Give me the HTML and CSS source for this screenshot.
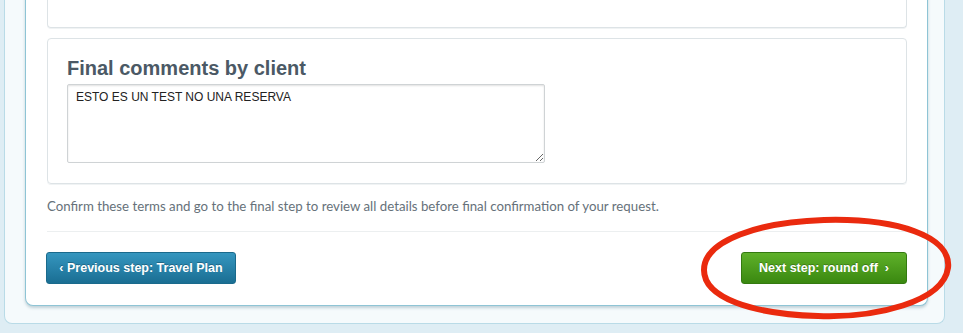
FILE: index.html
```html
<!DOCTYPE html>
<html>
<head>
    <title>Booking - Terms</title>
    <meta charset="UTF-8">
    <link rel="stylesheet" href="styles.css">
</head>
<body>
    <div class="outer">
        <div class="panel">
            <div class="box box_top"></div>
            <div class="box box_comments">
                <h2>Final comments by client</h2>
                <textarea>ESTO ES UN TEST NO UNA RESERVA</textarea>
            </div>
            <p class="note">Confirm these terms and go to the final step to review all details before final confirmation of your request.</p>
            <div class="actions">
                <a class="btn btn_prev" href="#">&lsaquo; Previous step: Travel Plan</a>
                <a class="btn btn_next" href="#">Next step: round off &nbsp;&rsaquo;</a>
            </div>
        </div>
    </div>
    <svg class="mark" width="260" height="110" viewBox="0 0 260 110">
        <path d="M124 4 C196 2 252 20 248 52 C243 86 176 102 118 100 C52 98 4 82 4 54 C4 24 60 6 124 4 Z" fill="none" stroke="#ea2a0e" stroke-width="6"/>
    </svg>
</body>
</html>
```

FILE: styles.css
```css
body{
    margin: 0;
    background: #deedf4;
    font-family: "Liberation Sans", Arial, sans-serif;
}
.outer{
    width: 903px;
    margin: -30px 0 0 4px;
    padding: 0 16px 17px 20px;
    background: #f5fafc;
    border: 1px solid #b9dbe7;
    border-top: none;
    border-radius: 0 0 8px 8px;
}
.panel{
    background: #fff;
    border: 1px solid #8ec4d5;
    border-top: none;
    border-radius: 0 0 8px 8px;
    box-shadow: 0 2px 3px rgba(40,90,110,.25);
    padding: 0 20px 21px 21px;
}
.box{
    border: 1px solid #dde3e6;
    border-radius: 4px;
    box-shadow: 0 1px 0 #f0f3f4;
}
.box_top{
    height: 57px;
    border-top: none;
    border-radius: 0 0 4px 4px;
}
.box_comments{
    margin-top: 10px;
    padding: 17px 19px 20px;
}
.box_comments h2{
    margin: 0 0 4px;
    font-size: 20px;
    line-height: 24px;
    color: #4b5965;
}
.box_comments textarea{
    display: block;
    box-sizing: border-box;
    width: 478px;
    height: 79px;
    margin: 0;
    padding: 5px 8px;
    border: 1px solid #cfd3d5;
    border-radius: 2px;
    box-shadow: inset 0 1px 2px rgba(0,0,0,.12);
    font-family: "Liberation Sans", Arial, sans-serif;
    font-size: 12px;
    color: #222;
    resize: vertical;
}
.note{
    margin: 0;
    padding: 14px 0 17px;
    border-bottom: 1px solid #eceff0;
    font-family: Lato, "Noto Sans", sans-serif;
    font-size: 13.25px;
    color: #66717a;
}
.actions{
    display: flex;
    justify-content: space-between;
    padding-top: 20px;
}
.btn{
    display: block;
    height: 32px;
    box-sizing: border-box;
    line-height: 30px;
    border-radius: 3px;
    font-size: 12.5px;
    font-weight: bold;
    color: #fff;
    text-decoration: none;
    text-shadow: 0 -1px 0 rgba(0,0,0,.25);
    text-align: center;
}
.btn_prev{
    width: 190px;
    margin-left: -1px;
    background: linear-gradient(#3596bf, #1a6e93);
    border: 1px solid #1a6a8c;
}
.btn_next{
    width: 166px;
    background: linear-gradient(#5fb12a, #3a8810);
    border: 1px solid #347a10;
}
.mark{
    position: absolute;
    left: 700px;
    top: 216px;
}
```
